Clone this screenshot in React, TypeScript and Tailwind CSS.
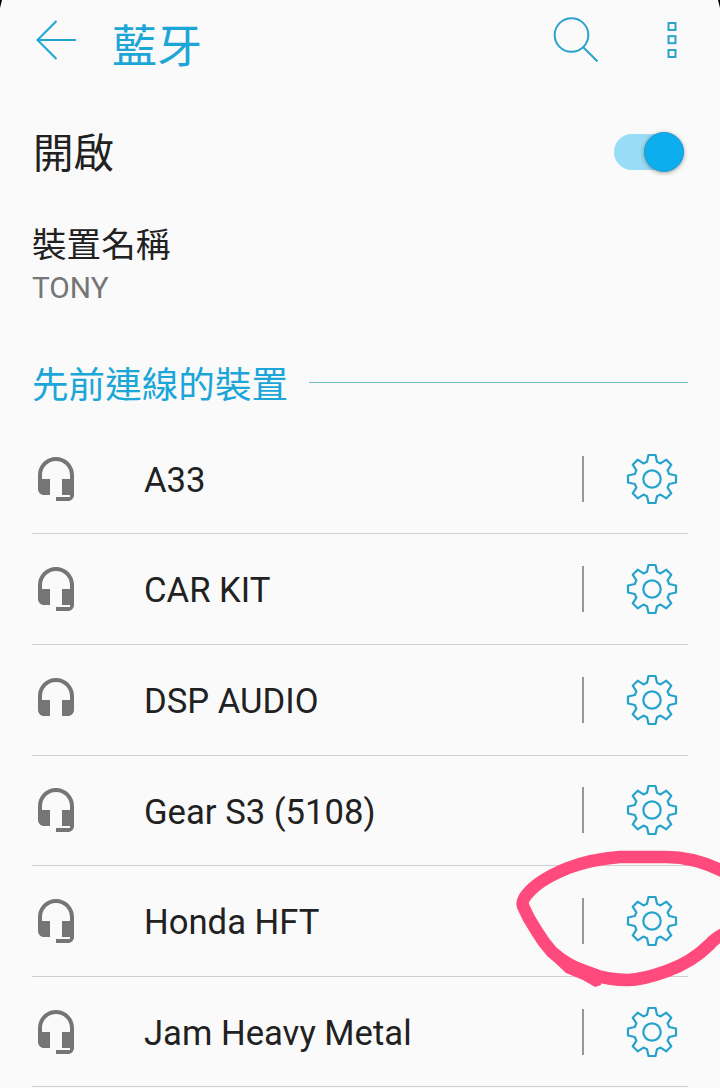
import React, { useState } from "react";

type Device = {
  name: string;
  hasMic: boolean;
};

const devices: Device[] = [
  { name: "A33", hasMic: true },
  { name: "CAR KIT", hasMic: true },
  { name: "DSP AUDIO", hasMic: false },
  { name: "Gear S3 (5108)", hasMic: true },
  { name: "Honda HFT", hasMic: true },
  { name: "Jam Heavy Metal", hasMic: true },
];

/* ---------- Icons ---------- */
const BackIcon: React.FC = () => (
  <svg width="44" height="44" viewBox="0 0 44 44" fill="none" stroke="#1fa5d3" strokeWidth="2">
    <path d="M42 22H4M22.500 3L3.500 22l19 19" />
  </svg>
);

const SearchIcon: React.FC = () => (
  <svg width="48" height="48" viewBox="0 0 48 48" fill="none" stroke="#2ba3cb" strokeWidth="2">
    <circle cx="21.500" cy="19" r="16.800" />
    <path d="M33 31l14.500 14.500" />
  </svg>
);

const MoreIcon: React.FC = () => (
  <svg width="10" height="38" viewBox="0 0 10 38" fill="none" stroke="#2ba3cb" strokeWidth="2">
    <rect x="1.500" y="2" width="7" height="7" />
    <rect x="1.500" y="15.200" width="7" height="7" />
    <rect x="1.500" y="29" width="7" height="7" />
  </svg>
);

const HeadsetIcon: React.FC<{ hasMic: boolean }> = ({ hasMic }) => (
  <svg width="48" height="48" viewBox="0 0 24 24" fill="#757575">
    {hasMic ? (
      <path d="M12 1c-4.970 0-9 4.030-9 9v7c0 1.660 1.340 3 3 3h3v-8H5v-2c0-3.870 3.130-7 7-7s7 3.130 7 7v2h-4v8h4v1h-7v2h6c1.660 0 3-1.340 3-3V10c0-4.970-4.030-9-9-9z" />
    ) : (
      <path d="M12 1c-4.970 0-9 4.030-9 9v7c0 1.660 1.340 3 3 3h3v-8H5v-2c0-3.870 3.130-7 7-7s7 3.130 7 7v2h-4v8h3c1.660 0 3-1.340 3-3v-7c0-4.970-4.030-9-9-9z" />
    )}
  </svg>
);

const GearIcon: React.FC = () => (
  <svg
    width="52"
    height="52"
    viewBox="-26 -26 52 52"
    fill="none"
    stroke="#25a3cd"
    strokeWidth="2.200"
    strokeLinejoin="round"
  >
    <path d="M-3.500-24H3.500L5-17.200L8.600-15.600L14.300-19.300L19.300-14.300L15.600-8.600L17.200-5L24-3.500V3.500L17.200 5L15.600 8.600L19.300 14.300L14.300 19.300L8.600 15.600L5 17.200L3.500 24H-3.500L-5 17.200L-8.600 15.600L-14.300 19.300L-19.300 14.300L-15.600 8.600L-17.200 5L-24 3.500V-3.500L-17.200-5L-15.600-8.600L-19.300-14.300L-14.300-19.300L-8.600-15.600L-5-17.200Z" />
    <circle r="8.700" />
  </svg>
);

const DeviceRow: React.FC<{ device: Device }> = ({ device }) => (
  <li className="flex h-[110.6px] shrink-0 items-center border-b border-[#cfcfcf]">
    <HeadsetIcon hasMic={device.hasMic} />
    <span className="ml-16 flex-1 whitespace-nowrap pt-[3px] text-[34.650px] leading-none text-[#212121]">
      {device.name}
    </span>
    <span className="h-[46px] w-0.5 bg-[#979797]" />
    <button className="ml-[42px] mr-2.5">
      <GearIcon />
    </button>
  </li>
);

export default function App() {
  const [enabled, setEnabled] = useState(true);

  return (
    <div className="relative flex h-[1088px] w-[720px] flex-col overflow-hidden bg-[#fafafa] font-[Roboto,'Noto_Sans_CJK_TC',sans-serif]">
      {/* Header */}
      <header className="flex h-20 shrink-0 items-center pl-[34px] pr-[43px]">
        <button>
          <BackIcon />
        </button>
        <h1 className="ml-[34px] flex-1 pt-3.5 text-[45px] leading-none text-[#1ca6d8]">藍牙</h1>
        <button className="mr-[69px]">
          <SearchIcon />
        </button>
        <button>
          <MoreIcon />
        </button>
      </header>

      {/* Bluetooth switch */}
      <section className="mt-8 flex h-20 shrink-0 items-center justify-between pl-[33px] pr-9">
        <span className="pt-[5px] text-[40.500px] leading-none text-[#212121]">開啟</span>
        <button
          onClick={() => setEnabled(!enabled)}
          className={`flex h-9 w-[70px] items-center rounded-full bg-[#9adcf5] ${
            enabled ? "justify-end" : "justify-start"
          }`}
        >
          <span className="size-10 shrink-0 rounded-full border border-[#1e9fd2] bg-[#0caeee] shadow-[0_1px_4px_rgba(0,0,0,0.35)]" />
        </button>
      </section>

      {/* Device name */}
      <section className="mt-[30px] h-[92px] shrink-0 pl-8">
        <div className="pt-[3px] text-[34.600px] leading-10 text-[#212121]">裝置名稱</div>
        <div className="pt-[3px] text-[29.800px] leading-10 text-[#757575]">TONY</div>
      </section>

      {/* Section title */}
      <div className="mt-[38px] flex h-[60px] shrink-0 items-center pl-8 pr-8">
        <h2 className="w-[277px] whitespace-nowrap pt-2 text-[36.600px] leading-none text-[#1ca6d8]">
          先前連線的裝置
        </h2>
        <span className="h-px flex-1 bg-[#6cbcc4]" />
      </div>

      {/* Device list */}
      <ul className="mx-8 mt-[11.900px] flex flex-col">
        {devices.map((device) => (
          <DeviceRow key={device.name} device={device} />
        ))}
      </ul>

      {/* Hand-drawn marker and rounded screen corners */}
      <svg className="pointer-events-none absolute inset-0" width="720" height="1088" viewBox="0 0 720 1088">
        <path
          d="M728 874Q697 857 666 857H620Q592 859 568 868Q541 879 530 891Q521 900 523 906Q528 918 536 930Q543 942 552 952Q568 966 590 974Q609 980 628 980Q642 980 667 971Q692 962 709 945Q717 936 728 932"
          fill="none"
          stroke="#ff4a7d"
          strokeWidth="12.500"
          strokeLinejoin="round"
        />
        <path d="M547 955L566 973L583 980L595 987L601 985L600 970L565 957Z" fill="#ff4a7d" />
        <path d="M0 0H2Q1 4 0 8Z" fill="#000" />
        <path d="M720 0H718Q719 4 720 8Z" fill="#000" />
      </svg>
    </div>
  );
}
